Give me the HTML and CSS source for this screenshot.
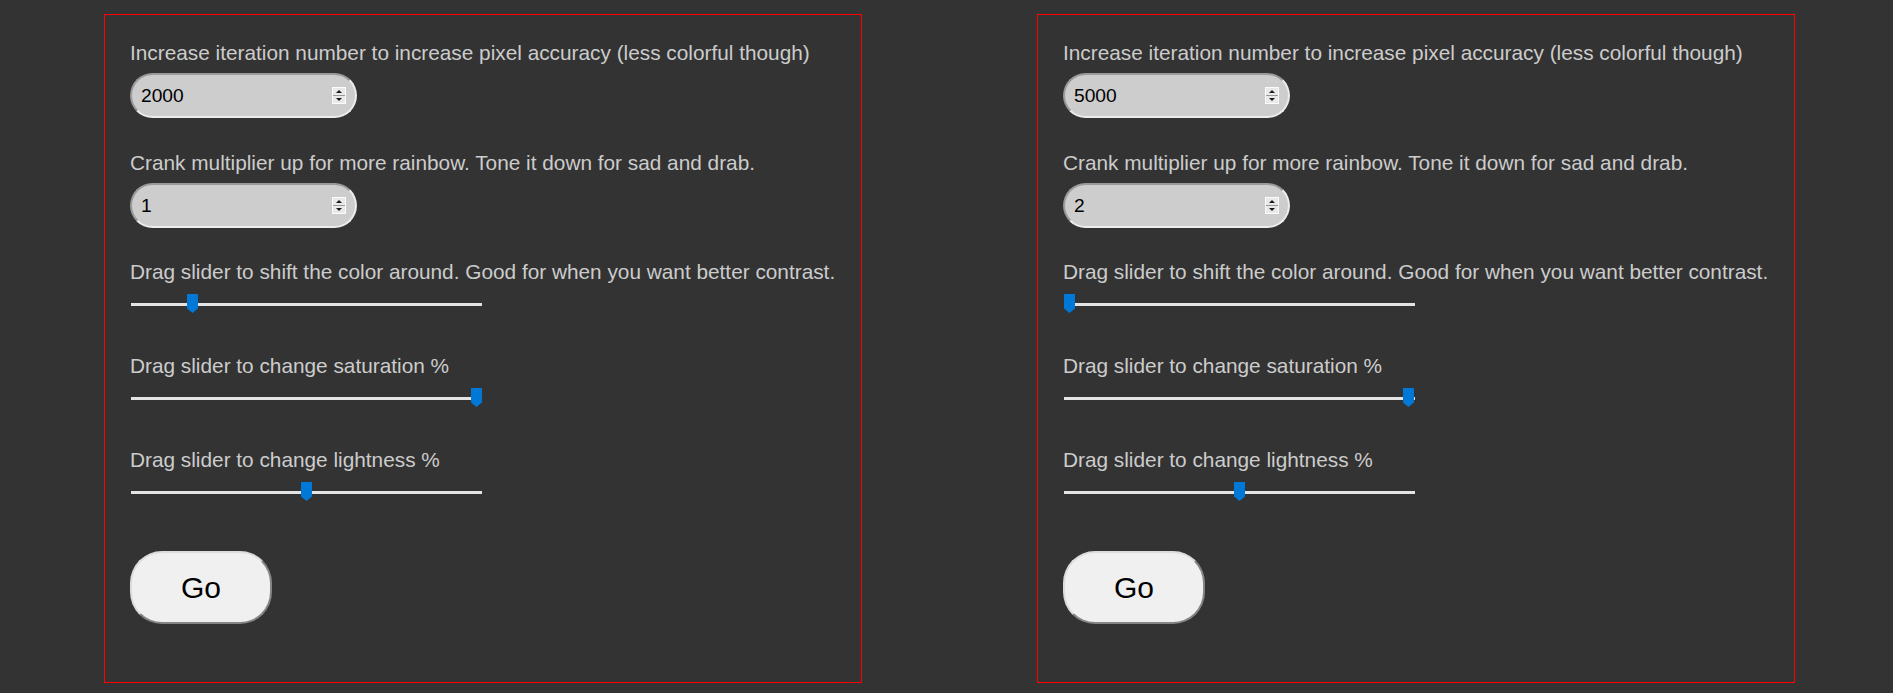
FILE: index.html
```html
<!DOCTYPE html>
<html lang="en">
<head>
<meta charset="utf-8">
<title>Fractal controls</title>
<link rel="stylesheet" href="styles.css">
</head>
<body>
<div class="page">
  <section class="panel">
    <div class="field field-num">
      <label class="label">Increase iteration number to increase pixel accuracy (less colorful though)</label>
      <div class="numbox">
        <input class="num" type="text" value="2000">
        <span class="spin"><svg width="14" height="17" viewBox="0 0 14 17"><rect x="0.5" y="0.5" width="13" height="16" fill="#e9e9e9" stroke="#fbfbfb"/><line x1="1" y1="8.5" x2="13" y2="8.5" stroke="#9a9a9a"/><path d="M4 6 L10 6 L7 3 Z" fill="#1a1a1a"/><path d="M4 11 L10 11 L7 14 Z" fill="#1a1a1a"/></svg></span>
      </div>
    </div>
    <div class="field field-num">
      <label class="label">Crank multiplier up for more rainbow. Tone it down for sad and drab.</label>
      <div class="numbox">
        <input class="num" type="text" value="1">
        <span class="spin"><svg width="14" height="17" viewBox="0 0 14 17"><rect x="0.5" y="0.5" width="13" height="16" fill="#e9e9e9" stroke="#fbfbfb"/><line x1="1" y1="8.5" x2="13" y2="8.5" stroke="#9a9a9a"/><path d="M4 6 L10 6 L7 3 Z" fill="#1a1a1a"/><path d="M4 11 L10 11 L7 14 Z" fill="#1a1a1a"/></svg></span>
      </div>
    </div>
    <div class="field field-range">
      <label class="label">Drag slider to shift the color around. Good for when you want better contrast.</label>
      <div class="slider"><div class="track"></div><div class="thumb" style="left:56px"></div></div>
    </div>
    <div class="field field-range">
      <label class="label">Drag slider to change saturation %</label>
      <div class="slider"><div class="track"></div><div class="thumb" style="left:340px"></div></div>
    </div>
    <div class="field field-range">
      <label class="label">Drag slider to change lightness %</label>
      <div class="slider"><div class="track"></div><div class="thumb" style="left:170px"></div></div>
    </div>
    <button class="go" type="button">Go</button>
  </section>

  <section class="panel">
    <div class="field field-num">
      <label class="label">Increase iteration number to increase pixel accuracy (less colorful though)</label>
      <div class="numbox">
        <input class="num" type="text" value="5000">
        <span class="spin"><svg width="14" height="17" viewBox="0 0 14 17"><rect x="0.5" y="0.5" width="13" height="16" fill="#e9e9e9" stroke="#fbfbfb"/><line x1="1" y1="8.5" x2="13" y2="8.5" stroke="#9a9a9a"/><path d="M4 6 L10 6 L7 3 Z" fill="#1a1a1a"/><path d="M4 11 L10 11 L7 14 Z" fill="#1a1a1a"/></svg></span>
      </div>
    </div>
    <div class="field field-num">
      <label class="label">Crank multiplier up for more rainbow. Tone it down for sad and drab.</label>
      <div class="numbox">
        <input class="num" type="text" value="2">
        <span class="spin"><svg width="14" height="17" viewBox="0 0 14 17"><rect x="0.5" y="0.5" width="13" height="16" fill="#e9e9e9" stroke="#fbfbfb"/><line x1="1" y1="8.5" x2="13" y2="8.5" stroke="#9a9a9a"/><path d="M4 6 L10 6 L7 3 Z" fill="#1a1a1a"/><path d="M4 11 L10 11 L7 14 Z" fill="#1a1a1a"/></svg></span>
      </div>
    </div>
    <div class="field field-range">
      <label class="label">Drag slider to shift the color around. Good for when you want better contrast.</label>
      <div class="slider"><div class="track"></div><div class="thumb" style="left:0px"></div></div>
    </div>
    <div class="field field-range">
      <label class="label">Drag slider to change saturation %</label>
      <div class="slider"><div class="track"></div><div class="thumb" style="left:339px"></div></div>
    </div>
    <div class="field field-range">
      <label class="label">Drag slider to change lightness %</label>
      <div class="slider"><div class="track"></div><div class="thumb" style="left:170px"></div></div>
    </div>
    <button class="go" type="button">Go</button>
  </section>
</div>
</body>
</html>
```

FILE: styles.css
```css
html, body {
  margin: 0;
  padding: 0;
  background: #333333;
}

body {
  font-family: "Liberation Sans", Arial, sans-serif;
  color: #cccccc;
}

.page {
  display: flex;
  align-items: flex-start;
  gap: 175px;
  padding: 14px 0 0 104px;
}

.panel {
  box-sizing: border-box;
  width: 758px;
  border: 1px solid #ff0000;
  padding: 26px 25px 58px 25px;
  display: flex;
  flex-direction: column;
  align-items: flex-start;
}

.field {
  display: flex;
  flex-direction: column;
  align-items: flex-start;
}

.label {
  display: block;
  font-size: 20.8px;
  line-height: 24px;
  color: #cccccc;
  white-space: nowrap;
}

.field-num .label {
  margin-bottom: 8px;
}

.field-num {
  margin-bottom: 34px;
}

.field-num + .field-num {
  margin-bottom: 33px;
}

.numbox {
  box-sizing: border-box;
  display: flex;
  align-items: center;
  width: 227px;
  height: 45px;
  border: 2px solid;
  border-color: #9a9a9a #ececec #ececec #9a9a9a;
  border-radius: 22.5px;
  background: #cdcdcd;
  padding: 0 9px 0 9px;
}

.field-num .numbox {
  margin-bottom: -1px;
}

.num {
  flex: 1;
  min-width: 0;
  border: none;
  outline: none;
  background: transparent;
  padding: 0;
  margin: 0;
  font-family: "Liberation Sans", Arial, sans-serif;
  font-size: 19.2px;
  color: #000000;
}

.spin {
  display: flex;
  width: 14px;
  height: 17px;
}

.field-range {
  margin-bottom: 40px;
}

.field-range .label {
  margin-bottom: 10px;
}

.slider {
  position: relative;
  width: 351px;
  height: 20px;
  margin-left: 1px;
}

.track {
  margin-top: 9px;
  height: 3px;
  background: #e4e4e4;
}

.thumb {
  position: absolute;
  top: 0;
  width: 11px;
  height: 19px;
  background: #0078d7;
  clip-path: polygon(0 0, 100% 0, 100% 76%, 50% 100%, 0 76%);
}

.go {
  box-sizing: border-box;
  margin-top: 9px;
  width: 142px;
  height: 73px;
  border: 2px solid;
  border-color: #dcdcdc #858585 #858585 #dcdcdc;
  border-radius: 32px;
  background: #f0f0f0;
  color: #000000;
  font-family: "Liberation Sans", Arial, sans-serif;
  font-size: 30px;
  padding: 0;
  cursor: pointer;
}
```
